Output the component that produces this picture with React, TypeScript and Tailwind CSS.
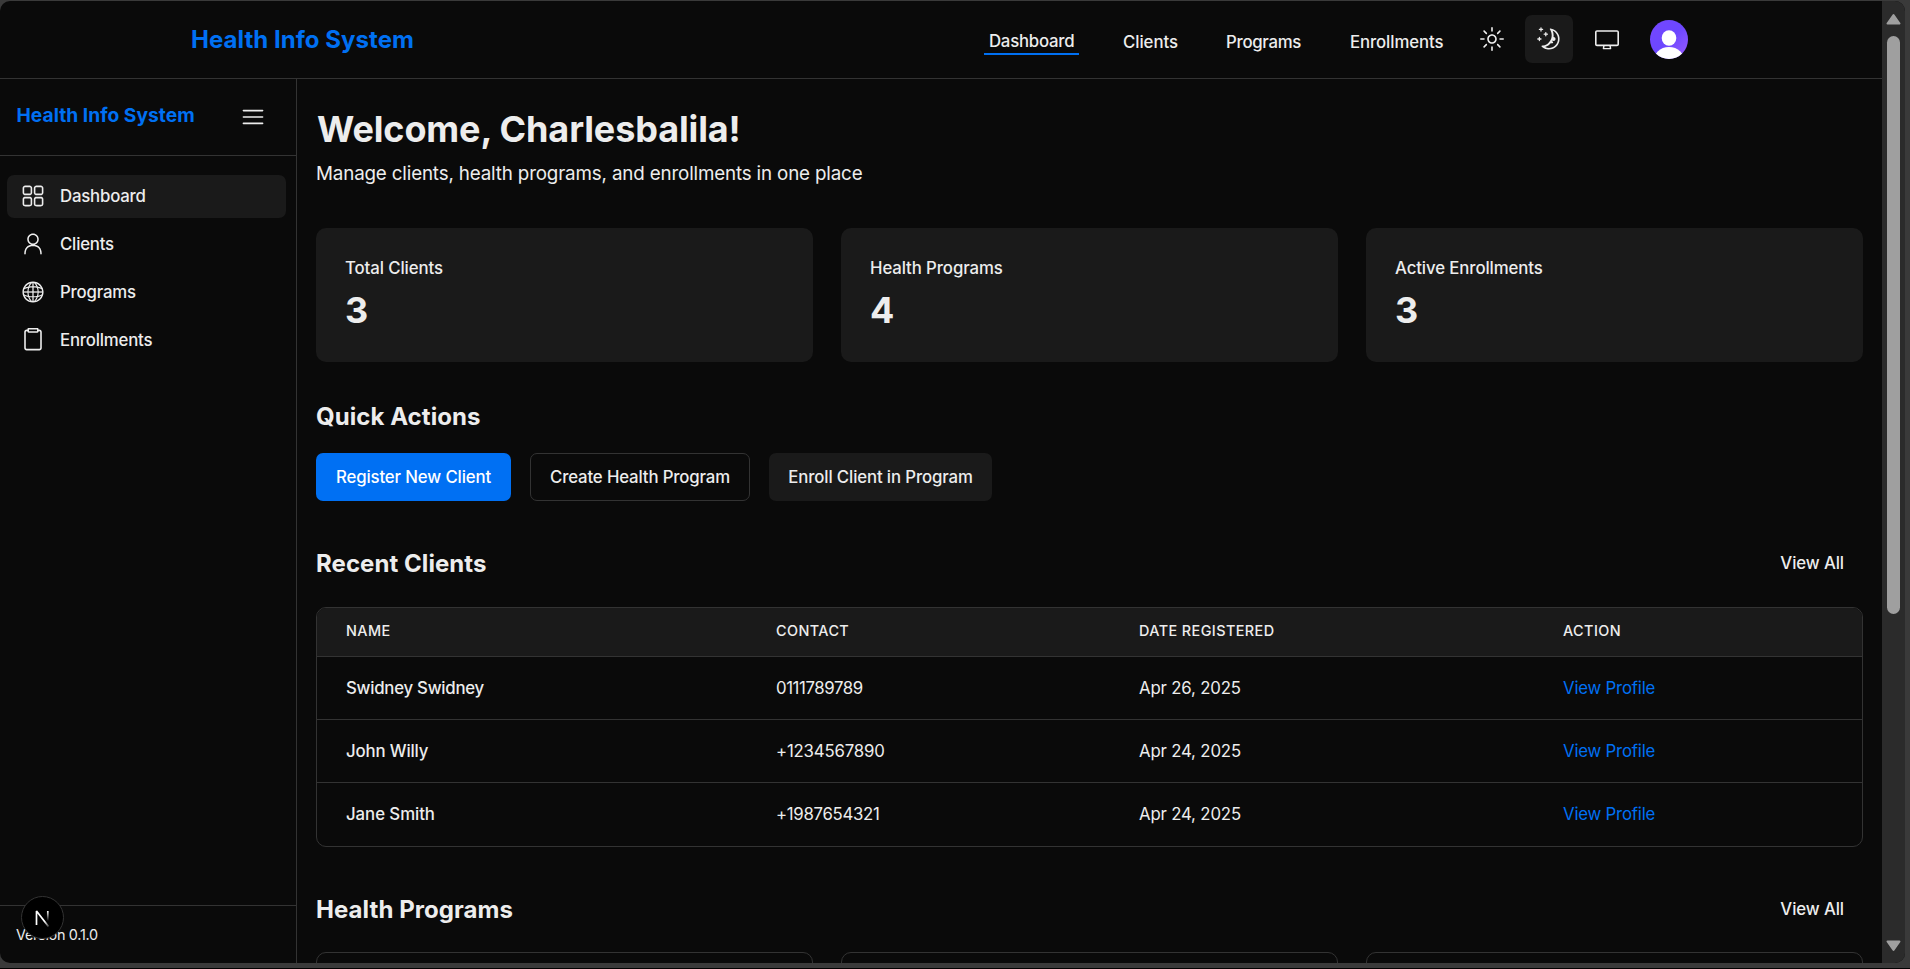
import React from "react";
import { RxDashboard, RxPerson, RxGlobe, RxClipboard, RxSun, RxMoon, RxDesktop, RxHamburgerMenu } from "react-icons/rx";

const NAV = [
  { label: "Dashboard", icon: RxDashboard, active: true },
  { label: "Clients", icon: RxPerson, active: false },
  { label: "Programs", icon: RxGlobe, active: false },
  { label: "Enrollments", icon: RxClipboard, active: false },
];

const STATS = [
  { label: "Total Clients", value: 3 },
  { label: "Health Programs", value: 4 },
  { label: "Active Enrollments", value: 3 },
];

const CLIENTS = [
  { name: "Swidney Swidney", contact: "0111789789", date: "Apr 26, 2025", nameClass: "tracking-[-0.25px]", contactClass: "tracking-[-0.4px]" },
  { name: "John Willy", contact: "+1234567890", date: "Apr 24, 2025", nameClass: "tracking-[-0.15px]", contactClass: "tracking-[-0.18px]" },
  { name: "Jane Smith", contact: "+1987654321", date: "Apr 24, 2025", nameClass: "tracking-[-0.05px]", contactClass: "tracking-[-0.3px]" },
];

const COLUMNS = "grid grid-cols-[430px_363px_424px_1fr] items-center pl-[29px]";

function Avatar() {
  return (
    <svg className="ml-[19px] h-[39px] w-[38px]" viewBox="0 0 38 39" preserveAspectRatio="none">
      <defs>
        <clipPath id="avatar-clip"><ellipse cx="19" cy="19.5" rx="19" ry="19.5" /></clipPath>
        <linearGradient id="avatar-fill" x1="0" y1="0" x2="1" y2="1">
          <stop offset="0" stopColor="#7547ff" />
          <stop offset="0.5" stopColor="#6c47ff" />
          <stop offset="1" stopColor="#9a5cff" />
        </linearGradient>
      </defs>
      <g clipPath="url(#avatar-clip)">
        <rect width="38" height="39" fill="url(#avatar-fill)" />
        <ellipse cx="19" cy="18" rx="7.3" ry="7.7" fill="#fff" />
        <ellipse cx="19" cy="42" rx="16" ry="15" fill="#fff" />
      </g>
    </svg>
  );
}

function Header() {
  return (
    <header className="flex h-[78px] shrink-0 items-center border-b border-[#333] pl-[191px]">
      <div className="w-[793px] pt-[1px] text-[24px] leading-[30px] font-bold tracking-[0.04px] text-[#0070f3]">Health Info System</div>
      <nav className="flex h-full items-start pt-[29px] text-[16.8px] leading-[23px] font-medium">
        <span className="w-[95px] border-b-2 border-[#0070f3] pl-[5px] tracking-[-0.25px]">Dashboard</span>
        <span className="mt-[1px] ml-[44px] w-[103px] tracking-[-0.05px]">Clients</span>
        <span className="mt-[1px] w-[124px] tracking-[-0.28px]">Programs</span>
        <span className="mt-[1px] w-[118px] tracking-[-0.1px]">Enrollments</span>
      </nav>
      <div className="flex h-full items-start pt-[14px]">
        <button className="grid size-[48px] place-items-center"><RxSun size={24} /></button>
        <button className="ml-[9px] grid size-[48px] place-items-center rounded-[7px] bg-[#1a1a1a]"><RxMoon size={24} /></button>
        <button className="ml-[10px] grid size-[48px] place-items-center"><RxDesktop size={24} /></button>
        <div className="pt-[5px]"><Avatar /></div>
      </div>
    </header>
  );
}

function Sidebar() {
  return (
    <aside className="flex w-[297px] shrink-0 flex-col border-r border-[#333]">
      <div className="flex h-[77px] shrink-0 items-center justify-between border-b border-[#333] pr-[31px] pl-[16.5px]">
        <span className="pb-[4px] text-[19.2px] leading-[24px] font-bold tracking-[0.03px] text-[#0070f3]">Health Info System</span>
        <RxHamburgerMenu size={24} />
      </div>
      <nav className="flex flex-col gap-[5px] pt-[19px] pr-[10px] pl-[7px]">
        {NAV.map(({ label, icon: Icon, active }) => (
          <div
            key={label}
            className={`flex h-[43px] items-center gap-[15px] rounded-[7px] pl-[14px] text-[16.8px] font-medium tracking-[-0.2px] ${active ? "bg-[#1a1a1a]" : ""}`}
          >
            <Icon size={24} className="mb-px" />
            <span>{label}</span>
          </div>
        ))}
      </nav>
      <div className="relative mt-auto h-[58px] shrink-0 border-t border-[#333] pt-[19px] pl-[16px] text-[14.4px] leading-[20px] tracking-[-0.3px]">
        Version 0.1.0
        <div className="absolute top-[-10px] left-[21px] grid size-[43px] place-items-center rounded-full border border-[#333] bg-black">
          <svg width="18" height="18" viewBox="0 0 18 18" fill="none" strokeWidth="1.7">
            <defs>
              <linearGradient id="stem-fade" gradientUnits="userSpaceOnUse" x1="0" y1="2" x2="0" y2="12">
                <stop offset="0" stopColor="#fff" />
                <stop offset="1" stopColor="#fff" stopOpacity="0" />
              </linearGradient>
              <linearGradient id="diagonal-fade" gradientUnits="userSpaceOnUse" x1="11" y1="12" x2="16" y2="19">
                <stop offset="0" stopColor="#fff" />
                <stop offset="1" stopColor="#fff" stopOpacity="0" />
              </linearGradient>
            </defs>
            <path d="M2.5 16V2L14.5 17.6" stroke="url(#diagonal-fade)" strokeLinejoin="bevel" />
            <path d="M13.8 2V12" stroke="url(#stem-fade)" />
          </svg>
        </div>
      </div>
    </aside>
  );
}

function SectionTitle({ title }: { title: string }) {
  return (
    <div className="mt-[48px] flex h-[29px] items-center justify-between pr-[19px]">
      <h2 className="text-[24px] leading-[29px] font-bold tracking-[0.06px]">{title}</h2>
      <a className="pt-px text-[16.8px] font-medium tracking-[-0.1px]">View All</a>
    </div>
  );
}

function Main() {
  return (
    <main className="flex min-w-0 flex-1 flex-col overflow-hidden pt-[32px] pr-[19px] pl-[19px]">
      <h1 className="h-[36px] shrink-0 pl-px text-[36px] leading-[36px] font-bold tracking-[-0.13px]">Welcome, Charlesbalila!</h1>
      <p className="mt-[12px] h-[29px] shrink-0 text-[18.8px] leading-[29px] tracking-[-0.16px]">
        Manage clients, health programs, and enrollments in one place
      </p>

      <div className="mt-[40px] grid shrink-0 grid-cols-3 gap-[28px]">
        {STATS.map(({ label, value }) => (
          <div key={label} className="h-[134px] rounded-[10px] bg-[#1a1a1a] px-[29px] pt-[28px]">
            <div className="text-[16.8px] leading-[24px] font-medium tracking-[-0.1px]">{label}</div>
            <div className="mt-[9px] text-[36px] leading-[43px] font-bold">{value}</div>
          </div>
        ))}
      </div>

      <h2 className="mt-[40px] h-[29px] shrink-0 text-[24px] leading-[29px] font-bold tracking-[0.06px]">Quick Actions</h2>
      <div className="mt-[22px] flex h-[48px] shrink-0 gap-[19px] text-[16.8px] font-medium">
        <button className="w-[195px] rounded-[7px] bg-[#0070f3] pt-px tracking-[-0.13px] text-white">Register New Client</button>
        <button className="w-[220px] rounded-[7px] border border-[#333] pt-px tracking-[-0.15px]">Create Health Program</button>
        <button className="w-[223px] rounded-[7px] bg-[#1a1a1a] pt-px tracking-[-0.13px]">Enroll Client in Program</button>
      </div>

      <SectionTitle title="Recent Clients" />
      <div className="mt-[29px] h-[240px] shrink-0 overflow-hidden rounded-[10px] border border-[#333]">
        <div className={`${COLUMNS} h-[49px] border-b border-[#333] bg-[#1a1a1a] pb-[2px] text-[14.4px] font-medium tracking-[0.42px] uppercase`}>
          <span>Name</span>
          <span>Contact</span>
          <span>Date Registered</span>
          <span>Action</span>
        </div>
        <div className="divide-y divide-[#333]">
          {CLIENTS.map((c) => (
            <div key={c.name} className={`${COLUMNS} h-[63px] pt-px text-[16.8px]`}>
              <span className={`font-medium ${c.nameClass}`}>{c.name}</span>
              <span className={c.contactClass}>{c.contact}</span>
              <span className="tracking-[-0.17px]">{c.date}</span>
              <a className="tracking-[-0.2px] text-[#0070f3]">View Profile</a>
            </div>
          ))}
        </div>
      </div>

      <SectionTitle title="Health Programs" />
      <div className="mt-[28px] grid shrink-0 grid-cols-3 gap-[28px]">
        <div className="h-[160px] rounded-[10px] border border-[#333]" />
        <div className="h-[160px] rounded-[10px] border border-[#333]" />
        <div className="h-[160px] rounded-[10px] border border-[#333]" />
      </div>
    </main>
  );
}

function Scrollbar() {
  return (
    <div className="flex w-[23px] shrink-0 flex-col items-center bg-[#2b2b2b] pt-[12px] pb-[11px]">
      <svg width="15" height="12" viewBox="0 0 15 12" fill="#9f9f9f" stroke="#9f9f9f" strokeWidth="2" strokeLinejoin="round">
        <path d="M7.5 2L13.5 10.5H1.5Z" />
      </svg>
      <div className="mt-[11px] h-[578px] w-[13px] rounded-full bg-[#9f9f9f]" />
      <svg className="mt-auto" width="15" height="12" viewBox="0 0 15 12" fill="#9f9f9f" stroke="#9f9f9f" strokeWidth="2" strokeLinejoin="round">
        <path d="M7.5 10L13.5 1.5H1.5Z" />
      </svg>
    </div>
  );
}

export default function App() {
  return (
    <div className="h-[969px] w-[1910px] overflow-hidden border-b border-black bg-[#3a3a3a] pt-px pr-[5px] pb-[5px] font-[Inter,sans-serif] text-[#ededed]">
      <div className="flex h-[962px] overflow-hidden rounded-[10px] bg-[#0a0a0a]">
        <div className="flex min-w-0 flex-1 flex-col">
          <Header />
          <div className="flex min-h-0 flex-1">
            <Sidebar />
            <Main />
          </div>
        </div>
        <Scrollbar />
      </div>
    </div>
  );
}
